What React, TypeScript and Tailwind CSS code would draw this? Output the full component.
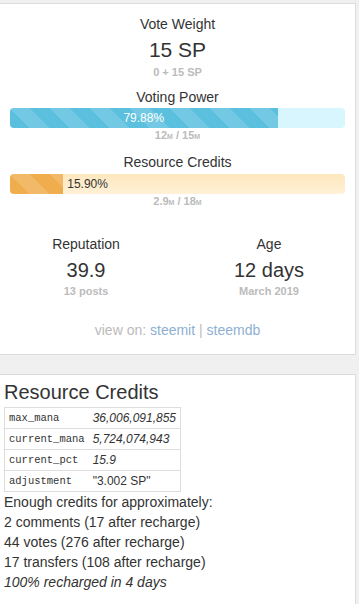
import React from "react";

const stripes =
  "bg-[linear-gradient(45deg,rgba(255,255,255,.15)_25%,transparent_25%,transparent_50%,rgba(255,255,255,.15)_50%,rgba(255,255,255,.15)_75%,transparent_75%,transparent)] bg-[length:40px_40px]";

function Bar({
  pct,
  fill,
  track,
  inside,
}: {
  pct: number;
  fill: string;
  track: string;
  inside: boolean;
}) {
  const label = pct.toFixed(2) + "%";
  return (
    <div className={`mx-[10px] flex h-[20px] overflow-hidden rounded-[4px] ${track}`}>
      <div
        className={`flex h-full shrink-0 items-center justify-center ${fill} ${stripes}`}
        style={{ width: `${pct}%` }}
      >
        {inside ? <span className="text-[12px] leading-[20px] text-white">{label}</span> : null}
      </div>
      {!inside ? (
        <span className="pl-[4px] text-[12px] leading-[20px] text-[#333]">{label}</span>
      ) : null}
    </div>
  );
}

function Mana({ a, b }: { a: string; b: string }) {
  return (
    <div className="text-center text-[11px] font-bold leading-[14px] text-[#bbb]">
      {a}
      <span className="text-[7px]">M</span> / {b}
      <span className="text-[7px]">M</span>
    </div>
  );
}

const rows: [string, string][] = [
  ["max_mana", "36,006,091,855"],
  ["current_mana", "5,724,074,943"],
  ["current_pct", "15.9"],
  ["adjustment", "\"3.002 SP\""],
];

export default function App() {
  return (
    <div className="min-h-[604px] bg-[#f0f0f0] pt-[3px] font-['Liberation_Sans',Arial,sans-serif] text-[#333]">
      <div className="w-[356px] border border-l-0 border-[#dcdcdc] bg-white pb-[14px]">
        <div className="mt-[10px] text-center text-[14px] leading-[20px]">Vote Weight</div>
        <div className="mt-[4px] text-center text-[21px] leading-[24px]">15 SP</div>
        <div className="mt-[3px] text-center text-[11px] font-bold leading-[14px] text-[#bbb]">
          0 + 15 SP
        </div>

        <div className="mt-[8px] text-center text-[14px] leading-[20px]">Voting Power</div>
        <div className="mt-[1px]">
          <Bar pct={79.88} fill="bg-[#5bc0de]" track="bg-[#d7f6fd]" inside />
        </div>
        <Mana a="12" b="15" />

        <div className="mt-[8px] text-center text-[14px] leading-[20px]">Resource Credits</div>
        <div className="mt-[2px]">
          <Bar
            pct={15.9}
            fill="bg-[#f0ad4e]"
            track="bg-[linear-gradient(#fde7bd,#fff1d8)]"
            inside={false}
          />
        </div>
        <Mana a="2.9" b="18" />

        <div className="mt-[24px] grid grid-cols-[172px_184px] text-center">
          <div>
            <div className="text-[14px] leading-[20px]">Reputation</div>
            <div className="mt-[4px] text-[20px] leading-[24px]">39.9</div>
            <div className="mt-[2px] text-[11px] font-bold leading-[14px] text-[#bbb]">13 posts</div>
          </div>
          <div className="-mr-[10px]">
            <div className="text-[14px] leading-[20px]">Age</div>
            <div className="mt-[4px] text-[20px] leading-[24px]">12 days</div>
            <div className="mt-[2px] text-[11px] font-bold leading-[14px] text-[#bbb]">March 2019</div>
          </div>
        </div>

        <div className="mt-[22px] text-center text-[14px] leading-[20px] text-[#bbb]">
          view on: <span className="text-[#8eb0d2]">steemit</span> |{" "}
          <span className="text-[#8eb0d2]">steemdb</span>
        </div>
      </div>

      <div className="mt-[19px] min-h-[230px] w-[356px] border border-b-0 border-l-0 border-[#dcdcdc] bg-white pl-[4px] pt-[5px]">
        <h2 className="text-[20px] leading-[24px]">Resource Credits</h2>
        <table className="mt-[3px] border-collapse border border-[#ddd]">
          <tbody>
            {rows.map(([k, v]) => (
              <tr key={k} className="border-t border-[#ddd]">
                <td className="h-[20px] px-[4px] py-0 font-['Liberation_Mono',monospace] text-[10.5px] leading-[20px]">
                  {k}
                </td>
                <td
                  className={`h-[20px] px-[4px] py-0 text-[12px] leading-[20px] ${
                    k === "adjustment" ? "" : "italic"
                  }`}
                >
                  {v}
                </td>
              </tr>
            ))}
          </tbody>
        </table>
        <div className="text-[14px] leading-[20px]">
          <div>Enough credits for approximately:</div>
          <div>2 comments (17 after recharge)</div>
          <div>44 votes (276 after recharge)</div>
          <div>17 transfers (108 after recharge)</div>
          <div className="italic">100% recharged in 4 days</div>
        </div>
      </div>
    </div>
  );
}
